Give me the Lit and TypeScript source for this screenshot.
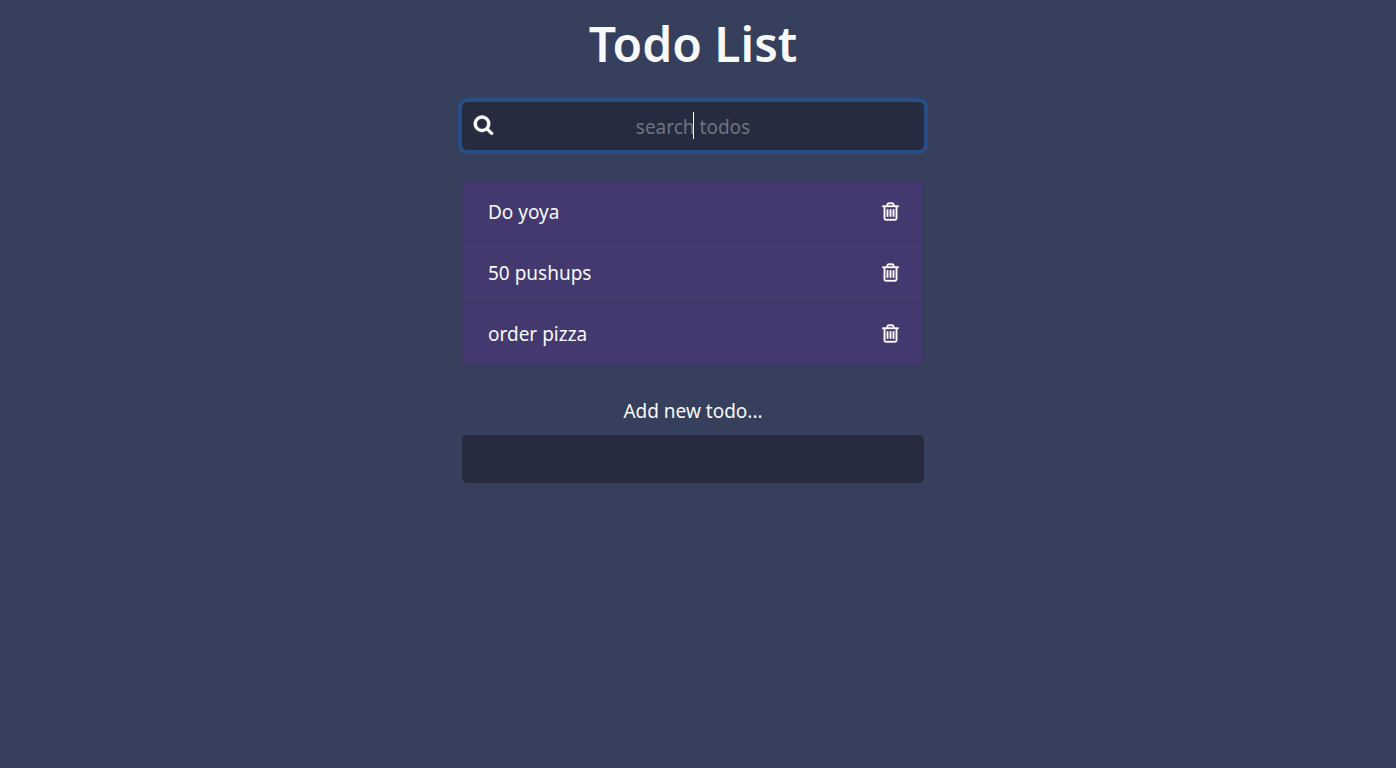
import { LitElement, html, css } from "lit";
import { customElement, state } from "lit/decorators.js";

@customElement("app-root")
export class AppRoot extends LitElement {
  @state() private todos = ["Do yoya", "50 pushups", "order pizza"];
  @state() private term = "";

  static styles = css`
    :host {
      display: block;
      box-sizing: border-box;
      min-height: 100vh;
      padding-right: 10px;
      background: #363f5b;
      color: #f8f9fa;
      font: 19px/30px "Noto Sans", "Open Sans", sans-serif;
    }
    *,
    *::before {
      box-sizing: border-box;
    }
    main {
      width: 33.3333%;
      margin: 0 auto;
      padding-top: 14px;
      text-align: center;
    }
    h1 {
      margin: 0 0 28px;
      font-size: 48px;
      line-height: 60px;
      font-weight: 600;
    }
    .search {
      position: relative;
      display: block;
      margin-bottom: 30px;
    }
    .search svg {
      position: absolute;
      left: 11px;
      top: 12px;
    }
    svg {
      display: block;
      width: 21px;
      height: 21px;
      fill: #fff;
    }
    .field {
      display: block;
      width: 100%;
      height: 48px;
      padding: 8px 12px 6px;
      border: 0;
      border-radius: 5px;
      outline: 0;
      background: #262b3f;
      color: #fff;
      font: inherit;
      text-align: center;
    }
    .field::placeholder {
      color: #6c757d;
      opacity: 1;
    }
    .active {
      box-shadow: 0 0 0 4px #274f85;
      caret-color: transparent;
    }
    .active:placeholder-shown {
      background: linear-gradient(#fff, #fff) calc(50% + 1px) 10px / 1px 27px no-repeat #262b3f;
    }
    .active:not(:placeholder-shown) {
      caret-color: #fff;
    }
    ul {
      list-style: none;
      margin: 0 0 30px;
      padding: 0;
      border: 1px solid #3d3564;
      border-radius: 5px;
      background: #43396e;
    }
    li {
      display: flex;
      align-items: center;
      justify-content: space-between;
      min-height: 61px;
      padding: 0 22px 0 25px;
      border-bottom: 1px solid #3d3564;
    }
    li:last-child {
      border-bottom-color: transparent;
    }
    .todo {
      padding-top: 2px;
    }
    .delete {
      padding: 0;
      border: 0;
      background: none;
      cursor: pointer;
    }
    .delete svg {
      stroke: #fff;
      stroke-width: 30;
    }
    .label {
      display: block;
      margin-bottom: 8px;
      line-height: 32px;
    }
  `;

  private remove(todo: string) {
    this.todos = this.todos.filter((t) => t !== todo);
  }

  private add(e: Event) {
    e.preventDefault();
    const form = e.target as HTMLFormElement;
    const value = String(new FormData(form).get("add") ?? "").trim();
    if (value) this.todos = [...this.todos, value];
    form.reset();
  }

  render() {
    const shown = this.todos.filter((t) => t.toLowerCase().includes(this.term));
    return html`
      <main>
        <h1>Todo List</h1>
        <div class="search">
          <input
            class="field active"
            type="text"
            placeholder="search todos"
            aria-label="search todos"
            @input=${(e: Event) => (this.term = (e.target as HTMLInputElement).value.toLowerCase())}
          />
          <svg viewBox="0 0 1792 1792" aria-hidden="true">
            <path d="M1216 832q0-185-131.5-316.5t-316.5-131.5-316.5 131.5-131.5 316.5 131.5 316.5 316.5 131.5 316.5-131.5 131.5-316.5zm512 832q0 52-38 90t-90 38q-54 0-90-38l-343-342q-179 124-399 124-143 0-273.5-55.5t-225-150-150-225-55.5-273.5 55.5-273.5 150-225 225-150 273.5-55.5 273.5 55.5 225 150 150 225 55.5 273.5q0 220-124 399l343 343q37 37 37 90z" stroke="#fff" stroke-width="30" />
          </svg>
        </div>
        <ul>
          ${shown.map(
            (todo) => html`<li>
              <span class="todo">${todo}</span>
              <button class="delete" type="button" aria-label="Delete ${todo}" @click=${() => this.remove(todo)}>
                <svg viewBox="0 0 1792 1792" aria-hidden="true">
                  <path d="M704 736v576q0 14-9 23t-23 9h-64q-14 0-23-9t-9-23v-576q0-14 9-23t23-9h64q14 0 23 9t9 23zm256 0v576q0 14-9 23t-23 9h-64q-14 0-23-9t-9-23v-576q0-14 9-23t23-9h64q14 0 23 9t9 23zm256 0v576q0 14-9 23t-23 9h-64q-14 0-23-9t-9-23v-576q0-14 9-23t23-9h64q14 0 23 9t9 23zm128 724v-948h-896v948q0 22 7 40.5t14.5 27 10.5 8.5h832q3 0 10.5-8.5t14.5-27 7-40.5zm-672-1076h448l-48-117q-7-9-17-11h-317q-10 2-17 11zm928 32v64q0 14-9 23t-23 9h-96v948q0 83-47 143.5t-113 60.5h-832q-66 0-113-58.5t-47-141.5v-952h-96q-14 0-23-9t-9-23v-64q0-14 9-23t23-9h309l70-167q15-37 54-63t79-26h320q40 0 79 26t54 63l70 167h309q14 0 23 9t9 23z" />
                </svg>
              </button>
            </li>`
          )}
        </ul>
        <form @submit=${this.add}>
          <label class="label" for="add">Add new todo...</label>
          <input class="field" id="add" name="add" type="text" autocomplete="off" />
        </form>
      </main>
    `;
  }
}
